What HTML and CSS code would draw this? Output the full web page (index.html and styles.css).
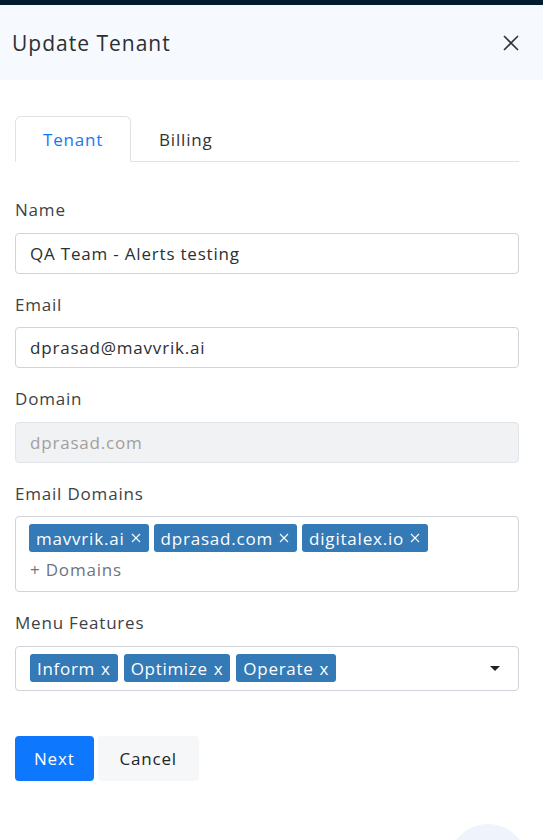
FILE: index.html
```html
<!DOCTYPE html>
<html lang="en">
<head>
    <meta charset="UTF-8">
    <meta name="viewport" content="width=device-width, initial-scale=1.0">
    <title>Update Tenant</title>
    <link rel="stylesheet" href="styles.css">
</head>
<body>
    <div class="topbar"></div>

    <div class="modal-header">
        <h2 class="modal-title">Update Tenant</h2>
        <button type="button" class="close-btn" aria-label="Close">
            <svg width="16" height="16" viewBox="0 0 16 16">
                <path d="M1 1 L15 15 M15 1 L1 15" stroke="#333" stroke-width="1.6" fill="none"/>
            </svg>
        </button>
    </div>

    <div class="modal-body">
        <ul class="tabs">
            <li class="tab active">Tenant</li>
            <li class="tab">Billing</li>
        </ul>

        <form class="tenant-form">
            <div class="field">
                <label>Name</label>
                <input type="text" class="input" value="QA Team - Alerts testing">
            </div>

            <div class="field">
                <label>Email</label>
                <input type="text" class="input" value="dprasad@mavvrik.ai">
            </div>

            <div class="field">
                <label>Domain</label>
                <input type="text" class="input" value="dprasad.com" disabled>
            </div>

            <div class="field">
                <label>Email Domains</label>
                <div class="tag-box">
                    <div class="tags">
                        <span class="tag">mavvrik.ai
                            <svg class="tag-x" width="10" height="10" viewBox="0 0 10 10"><path d="M1 1 L9 9 M9 1 L1 9" stroke="#fff" stroke-width="1.1" fill="none"/></svg>
                        </span>
                        <span class="tag">dprasad.com
                            <svg class="tag-x" width="10" height="10" viewBox="0 0 10 10"><path d="M1 1 L9 9 M9 1 L1 9" stroke="#fff" stroke-width="1.1" fill="none"/></svg>
                        </span>
                        <span class="tag">digitalex.io
                            <svg class="tag-x" width="10" height="10" viewBox="0 0 10 10"><path d="M1 1 L9 9 M9 1 L1 9" stroke="#fff" stroke-width="1.1" fill="none"/></svg>
                        </span>
                    </div>
                    <div class="tag-add">+ Domains</div>
                </div>
            </div>

            <div class="field">
                <label>Menu Features</label>
                <div class="multi-select">
                    <div class="chips">
                        <span class="chip">Inform <span class="chip-x">x</span></span>
                        <span class="chip">Optimize <span class="chip-x">x</span></span>
                        <span class="chip">Operate <span class="chip-x">x</span></span>
                    </div>
                    <span class="caret"></span>
                </div>
            </div>

            <div class="actions">
                <button type="button" class="btn btn-primary">Next</button>
                <button type="button" class="btn btn-light">Cancel</button>
            </div>
        </form>
    </div>

    <!-- floating help bubble, mostly off screen -->
    <div class="fab"></div>
</body>
</html>
```

FILE: styles.css
```css
/* Modal form: update tenant */
body {
    margin: 0;
    background-color: #fff;
    color: #212529;
    font-family: 'Open Sans', 'Liberation Sans', sans-serif;
    font-size: 17px;
    letter-spacing: 0.8px;
    height: 840px;
    overflow: hidden;
    position: relative;
}

.topbar {
    height: 5px;
    background-color: #011c2f;
}

.modal-header {
    height: 75px;
    background-color: #f6f9fe;
    display: flex;
    align-items: center;
    justify-content: space-between;
    padding: 0 24px 0 12px;
}

.modal-title {
    margin: 0;
    font-size: 21px;
    font-weight: 400;
    letter-spacing: 1px;
    color: #2b2f33;
}

.close-btn {
    background: none;
    border: none;
    padding: 0;
    width: 16px;
    height: 16px;
    display: flex;
}

.modal-body {
    padding: 36px 24px 0 15px;
}

.tabs {
    list-style: none;
    margin: 0;
    padding: 0;
    display: flex;
    border-bottom: 1px solid #dee2e6;
}

.tab {
    height: 44px;
    display: flex;
    align-items: center;
    padding: 0 27px;
    color: #333;
    border: 1px solid transparent;
    border-radius: 6px 6px 0 0;
    margin-bottom: -1px;
}

.tab.active {
    color: #1677f5;
    background-color: #fff;
    border-color: #dee2e6 #dee2e6 #fff;
}

.tenant-form {
    padding-top: 36px;
}

.field {
    margin-bottom: 19px;
}

.field label {
    display: block;
    line-height: 24px;
    margin-bottom: 10.5px;
    color: #3d4247;
}

.input {
    box-sizing: border-box;
    width: 100%;
    height: 41px;
    padding: 0 14px;
    border: 1px solid #ced4da;
    border-radius: 4px;
    font-family: inherit;
    font-size: 17px;
    letter-spacing: 0.8px;
    color: #2b2f33;
    background-color: #fff;
}

.input:disabled {
    background-color: #f1f2f4;
    color: #a0a0a0;
    border-color: #e1e4e8;
}

.tag-box {
    box-sizing: border-box;
    height: 76px;
    border: 1px solid #ced4da;
    border-radius: 4px;
    padding: 7px 13px;
}

.tags {
    display: flex;
    gap: 5px;
}

.tag, .chip {
    display: inline-flex;
    align-items: center;
    height: 28px;
    padding: 0 7px;
    background-color: #337ab7;
    color: #fff;
    border-radius: 3px;
    white-space: nowrap;
}

.tag-x {
    margin-left: 6px;
    margin-right: 1px;
}

.tag-add {
    line-height: 36px;
    padding-left: 1px;
    color: #6c757d;
}

.multi-select {
    box-sizing: border-box;
    height: 45px;
    border: 1px solid #ced4da;
    border-radius: 4px;
    padding: 0 18px 0 14px;
    display: flex;
    align-items: center;
    justify-content: space-between;
}

.chips {
    display: flex;
    gap: 6px;
}

.chip {
    padding: 0 7px;
    letter-spacing: 0.7px;
}

.chip-x {
    margin-left: 6px;
}

.caret {
    width: 0;
    height: 0;
    border-left: 5px solid transparent;
    border-right: 5px solid transparent;
    border-top: 5px solid #222;
}

.actions {
    display: flex;
    gap: 4px;
    margin-top: 45px;
}

.btn {
    height: 45px;
    border: none;
    border-radius: 4px;
    font-family: inherit;
    font-size: 17px;
    letter-spacing: 0.8px;
    padding: 0 19px;
}

.btn-primary {
    background-color: #0d78fd;
    color: #fff;
}

.btn-light {
    background-color: #f6f7f9;
    color: #212529;
    padding: 0 22px;
}

.fab {
    position: absolute;
    left: 448px;
    top: 824px;
    width: 80px;
    height: 80px;
    border-radius: 50%;
    background-color: #eef3fc;
}
```
